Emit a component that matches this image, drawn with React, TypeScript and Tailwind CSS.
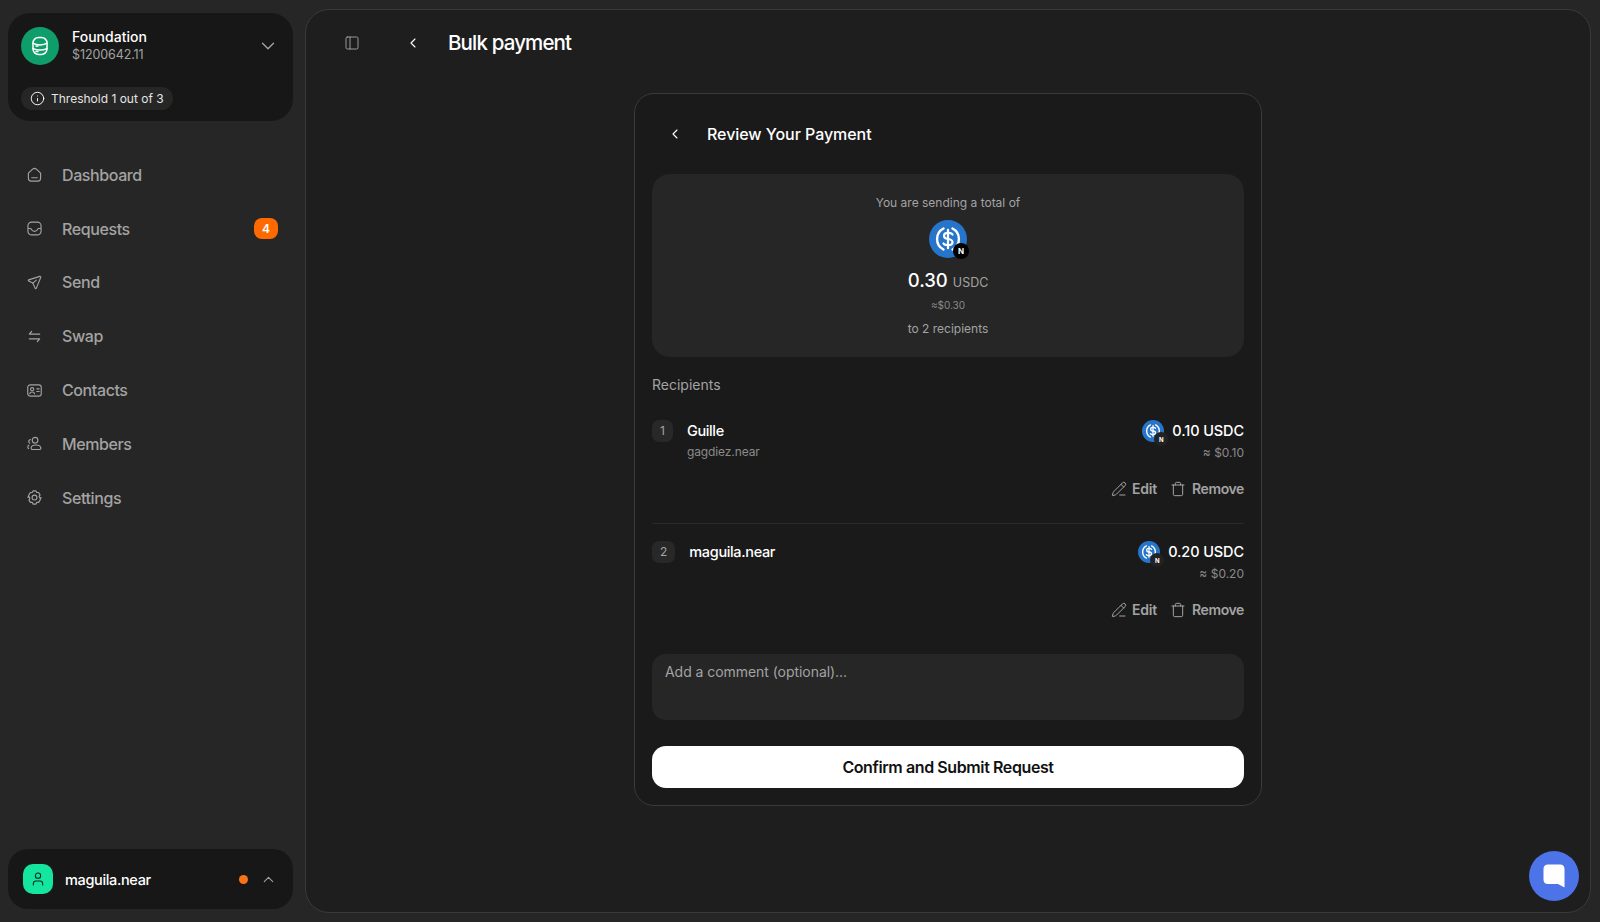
import { ChevronDown, ChevronLeft, ChevronUp, Info, PanelLeft, PencilLine, Trash, User } from 'lucide-react';

function HomeIcon() {
  return (
    <svg viewBox="0 0 16 16" fill="none" stroke="currentColor" strokeWidth="1.2" className="w-[15px] h-[15px]">
      <path d="M1.5 6.5 L6 2.3 Q8 0.7 10 2.3 L14.5 6.5 V12 Q14.5 15 11.5 15 H4.5 Q1.5 15 1.5 12 Z" strokeLinejoin="round" />
      <path d="M5 11.5 H11" strokeLinecap="round" />
    </svg>
  );
}

function InboxIcon() {
  return (
    <svg viewBox="0 0 16 16" fill="none" stroke="currentColor" strokeWidth="1.2" className="w-[15px] h-[15px]">
      <rect x="1" y="1.2" width="14" height="13.6" rx="4" />
      <path d="M1 8 H4 Q5.5 11 8 11 Q10.5 11 12 8 H15" strokeLinejoin="round" />
    </svg>
  );
}

function SendIcon() {
  return (
    <svg viewBox="0 0 16 16" fill="none" stroke="currentColor" strokeWidth="1.2" strokeLinejoin="round" strokeLinecap="round" className="w-[15px] h-[15px]">
      <path d="M13.6 1.5 L1.8 5.2 Q0.8 5.7 1.8 6.4 L6.2 8.6 L8.6 14 Q9.3 15 10 14 L14.6 2.6 Q14.8 1.3 13.6 1.5 Z" />
      <path d="M6.2 8.6 L10 5.4" />
    </svg>
  );
}

function SwapIcon() {
  return (
    <svg viewBox="0 0 16 16" fill="none" stroke="currentColor" strokeWidth="1.3" strokeLinecap="round" strokeLinejoin="round" className="w-[15px] h-[15px]">
      <path d="M5 2.5 L2.5 5.5 H13.5" />
      <path d="M11 13.5 L13.5 10.5 H2.5" />
    </svg>
  );
}

function ContactIcon() {
  return (
    <svg viewBox="0 0 16 16" fill="none" stroke="currentColor" strokeWidth="1.2" strokeLinecap="round" className="w-[15px] h-[15px]">
      <rect x="0.8" y="2" width="14.4" height="12" rx="2.6" />
      <circle cx="5.5" cy="6.6" r="1.7" />
      <path d="M2.9 11.6 Q3.2 9.6 5.5 9.6 Q7.8 9.6 8.1 11.6" />
      <path d="M10.4 6.2 H13 M10.4 9 H13" />
    </svg>
  );
}

function MembersIcon() {
  return (
    <svg viewBox="0 0 16 16" fill="none" stroke="currentColor" strokeWidth="1.2" strokeLinecap="round" className="w-[15px] h-[15px]">
      <circle cx="8.6" cy="4.4" r="3" />
      <path d="M5.2 14.4 H12.8 Q15 14.4 14.8 12.6 Q14 9.6 9.4 9.6 Q5 9.6 4.4 12.4 Q4.2 14 5.2 14.4 Z" />
      <path d="M3.6 3.8 Q1.4 4.4 2 6.6 Q2.4 7.4 3 7.6" />
      <path d="M2 9.8 Q0.6 10.6 0.9 12.2 Q1 13 1.7 13.4" />
    </svg>
  );
}

function GearIcon() {
  return (
    <svg viewBox="0 0 16 16" fill="none" stroke="currentColor" strokeWidth="1.2" strokeLinejoin="round" className="w-[15px] h-[15px]">
      <path d="M6.6 0.9 H9.4 L10.4 2.7 L12.4 2.7 L13.9 5.2 L12.9 6.9 L13.9 8.8 L15 8 L13.9 10.8 L12.4 13.2 H10.4 L9.4 15.1 H6.6 L5.6 13.2 H3.6 L2.1 10.8 L3.1 8.9 L2.1 7 L1 8 L2.1 5.2 L3.6 2.7 H5.6 Z" strokeLinecap="round" />
      <circle cx="8" cy="8" r="2.6" />
    </svg>
  );
}

function TreasuryIcon() {
  return (
    <svg viewBox="0 0 20 20" fill="none" stroke="currentColor" strokeWidth="1.5" strokeLinecap="round" className="w-[20px] h-[20px]">
      <rect x="3" y="1.5" width="14" height="17" rx="5.5" />
      <path d="M3 7.4 Q10 10.4 17 7.4" />
      <path d="M3 12.6 Q10 15.6 17 12.6" />
      <path d="M6 10 H8 M6 15.4 H8" />
    </svg>
  );
}

function UsdcIcon({ big }: { big?: boolean }) {
  return (
    <div className={big ? 'relative w-[38px] h-[38px]' : 'relative w-[22px] h-[22px]'}>
      <svg viewBox="0 0 38 38" className="w-full h-full">
        <circle cx="19" cy="19" r="19" fill="#2775ca" />
        <path d="M14.5 8.5 A11.8 11.8 0 0 0 14.5 29.5" fill="none" stroke="#fff" strokeWidth="2.4" strokeLinecap="round" />
        <path d="M23.5 8.5 A11.8 11.8 0 0 1 23.5 29.5" fill="none" stroke="#fff" strokeWidth="2.4" strokeLinecap="round" />
        <path d="M23.5 14.5 Q22.5 12.8 19 12.8 Q15 12.8 15 15.8 Q15 18.5 19 19 Q23.5 19.5 23.5 22.2 Q23.5 25.2 19 25.2 Q15.5 25.2 14.5 23.5" fill="none" stroke="#fff" strokeWidth="2.2" strokeLinecap="round" />
        <path d="M19 9.8 V28.2" stroke="#fff" strokeWidth="2.2" strokeLinecap="round" />
      </svg>
      <div className={big
        ? 'absolute -right-[2px] -bottom-[1px] w-[16px] h-[16px] rounded-full bg-black flex items-center justify-center text-white text-[8px] font-bold'
        : 'absolute -right-[4px] -bottom-[4px] w-[14px] h-[14px] rounded-full bg-[#222] flex items-center justify-center text-white text-[6px] font-bold'}>
        N
      </div>
    </div>
  );
}

const navItems = [
  { label: 'Dashboard', icon: <HomeIcon /> },
  { label: 'Requests', icon: <InboxIcon />, badge: 4 },
  { label: 'Send', icon: <SendIcon /> },
  { label: 'Swap', icon: <SwapIcon /> },
  { label: 'Contacts', icon: <ContactIcon /> },
  { label: 'Members', icon: <MembersIcon /> },
  { label: 'Settings', icon: <GearIcon /> },
];

function RecipientRow({ index, name, account, amount, usd, last }: { index: number; name: string; account?: string; amount: string; usd: string; last?: boolean }) {
  return (
    <div className={last ? 'pt-[17px]' : 'pb-[24px] border-b border-[#2a2a2a]'}>
      <div className="flex justify-between">
        <div className="flex gap-[14px]">
          <div className="h-[22px] px-[8px] rounded-[7px] bg-[#282828] flex items-center justify-center text-[12px] text-[#a3a3a3]">{index}</div>
          <div>
            <div className="text-[14.5px] leading-[22px] font-medium tracking-[-0.35px] text-white">{name}</div>
            {account && <div className="text-[12px] leading-[20px] tracking-[-0.1px] text-[#8a8a8a]">{account}</div>}
          </div>
        </div>
        <div className="flex flex-col items-end">
          <div className="flex items-center gap-[8px] h-[22px]">
            <UsdcIcon />
            <span className="text-[14.5px] font-medium tracking-[-0.1px] text-white">{amount}</span>
          </div>
          <div className="text-[12px] leading-[20px] mt-[1px] text-[#8a8a8a]">≈ {usd}</div>
        </div>
      </div>
      <div className="flex justify-end gap-[13px] mt-[15px] text-[#a3a3a3]">
        <div className="flex items-center gap-[5px]">
          <PencilLine className="w-[16px] h-[16px]" strokeWidth={1.5} />
          <span className="text-[14px] font-semibold tracking-[-0.2px]">Edit</span>
        </div>
        <div className="flex items-center gap-[6px]">
          <Trash className="w-[16px] h-[16px]" strokeWidth={1.5} />
          <span className="text-[14px] font-semibold tracking-[-0.4px]">Remove</span>
        </div>
      </div>
    </div>
  );
}

export default function App() {
  return (
    <div className="relative h-[922px] w-[1600px] overflow-hidden flex bg-[#262626] font-['Inter',sans-serif]">
      <aside className="w-[305px] shrink-0 flex flex-col pt-[13px] pb-[13px] pl-[8px] pr-[12px]">
        <div className="h-[108px] rounded-[22px] bg-[#171717] px-[13px] pt-[14px]">
          <div className="flex items-center gap-[13px]">
            <div className="w-[38px] h-[38px] rounded-full bg-[#0f9d6b] flex items-center justify-center text-white">
              <TreasuryIcon />
            </div>
            <div className="flex-1">
              <div className="text-[14px] leading-[18px] font-medium text-white">Foundation</div>
              <div className="text-[12.5px] leading-[18px] tracking-[-0.1px] text-[#a3a3a3]">$1200642.11</div>
            </div>
            <ChevronDown className="w-[22px] h-[22px] mr-[1px] -mt-[1px] text-[#a3a3a3]" strokeWidth={1.5} />
          </div>
          <div className="mt-[22px] inline-flex items-center gap-[6px] h-[23px] px-[9px] rounded-full bg-[#262626] text-white">
            <Info className="w-[15px] h-[15px]" strokeWidth={1.5} />
            <span className="text-[12px] text-[#e5e5e5]">Threshold 1 out of 3</span>
          </div>
        </div>

        <nav className="mt-[27px] flex-1 flex flex-col px-[19px]">
          {navItems.map(item => (
            <div key={item.label} className="h-[53.8px] shrink-0 flex items-center text-[#a3a3a3]">
              <div className="w-[35px]">{item.icon}</div>
              <span className="flex-1 text-[16px] font-medium tracking-[-0.4px]">{item.label}</span>
              {item.badge && (
                <span className="w-[24px] h-[21px] -mr-[4px] rounded-[8px] bg-[#ff6a00] flex items-center justify-center text-[12px] font-semibold text-white">{item.badge}</span>
              )}
            </div>
          ))}
        </nav>

        <div className="h-[60px] rounded-[20px] bg-[#171717] flex items-center pl-[15px] pr-[16px]">
          <div className="w-[30px] h-[30px] rounded-[10px] bg-[#14e6a0] flex items-center justify-center text-[#0d2a20]">
            <User className="w-[16px] h-[16px]" strokeWidth={1.6} />
          </div>
          <span className="ml-[12px] flex-1 text-[14.5px] font-medium tracking-[-0.35px] text-white mt-[1px]">maguila.near</span>
          <span className="w-[9px] h-[9px] rounded-full bg-[#f97316]" />
          <ChevronUp className="w-[17px] h-[17px] ml-[12px] text-[#a3a3a3]" strokeWidth={1.5} />
        </div>
      </aside>

      <main className="flex-1 mt-[9px] mb-[9px] mr-[9px] rounded-[24px] border border-[#3a3a3a] bg-[#1e1e1e]">
        <header className="flex items-center h-[66px] pl-[38px]">
          <PanelLeft className="w-[16px] h-[16px] text-[#a3a3a3]" strokeWidth={1.4} />
          <ChevronLeft className="w-[16px] h-[16px] ml-[45px] text-white" strokeWidth={1.6} />
          <h1 className="ml-[27px] text-[20.5px] font-medium tracking-[-0.85px] text-white">Bulk payment</h1>
        </header>

        <section className="mx-auto mt-[17px] w-[628px] h-[713px] rounded-[20px] border border-[#3a3a3a] bg-[#1a1a1a] px-[17px]">
          <div className="flex items-center h-[80px] pl-[15px]">
            <ChevronLeft className="w-[16px] h-[16px] text-white" strokeWidth={1.6} />
            <h2 className="ml-[24px] text-[16px] font-medium tracking-[-0.05px] text-white">Review Your Payment</h2>
          </div>

          <div className="h-[183px] rounded-[18px] bg-[#262626] flex flex-col items-center pt-[20px] text-[#a3a3a3]">
            <div className="text-[12px] leading-[18px]">You are sending a total of</div>
            <div className="mt-[8px]"><UsdcIcon big /></div>
            <div className="mt-[8px] flex items-baseline gap-[5px] leading-[28px]">
              <span className="text-[18.5px] font-medium text-white">0.30</span>
              <span className="text-[12.5px]">USDC</span>
            </div>
            <div className="text-[10px] leading-[16px] text-[#8a8a8a]">≈$0.30</div>
            <div className="mt-[7px] text-[12px] leading-[18px]">to 2 recipients</div>
          </div>

          <div className="mt-[18px] text-[14px] leading-[20px] text-[#a3a3a3]">Recipients</div>

          <div className="mt-[25px]">
            <RecipientRow index={1} name="Guille" account="gagdiez.near" amount="0.10 USDC" usd="$0.10" />
            <RecipientRow index={2} name="maguila.near" amount="0.20 USDC" usd="$0.20" last />
          </div>

          <div className="mt-[34px] h-[66px] rounded-[14px] bg-[#262626] px-[13px] pt-[8px] text-[14px] leading-[20px] tracking-[-0.05px] text-[#a3a3a3]">
            Add a comment (optional)...
          </div>

          <button className="mt-[26px] w-full h-[42px] rounded-[14px] bg-white text-[16px] font-semibold tracking-[-0.4px] text-[#111]">
            Confirm and Submit Request
          </button>
        </section>
      </main>

      <button className="absolute left-[1529px] top-[851px] w-[50px] h-[50px] rounded-full bg-[#4c74e8] flex items-center justify-center">
        <svg viewBox="0 0 22 24" className="w-[22px] h-[24px]" fill="#fff">
          <path d="M5 0.5 H17 Q21.5 0.5 21.5 5 V23.5 L15 20 H5 Q0.5 20 0.5 15.5 V5 Q0.5 0.5 5 0.5 Z" />
        </svg>
      </button>
    </div>
  );
}
